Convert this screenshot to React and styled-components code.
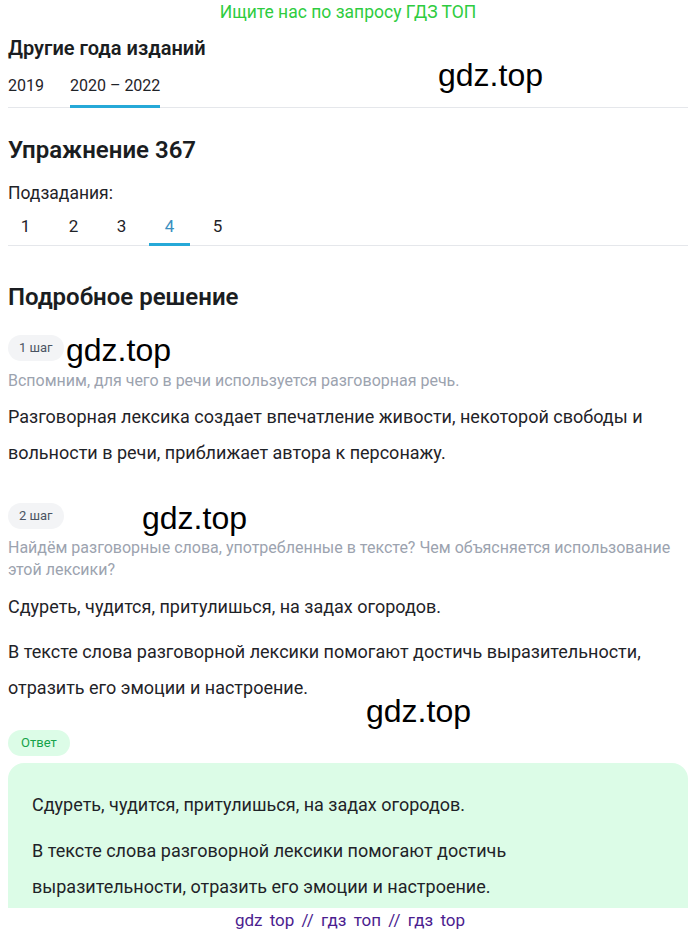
import React from "react";
import styled, { createGlobalStyle } from "styled-components";

const Global = createGlobalStyle`
  html, body { margin: 0; padding: 0; background: #fff; }
  body { font-family: Roboto, "Noto Sans", sans-serif; color: #1f2328; }
  * { box-sizing: border-box; }
`;

const Page = styled.div`
  position: relative;
  padding: 0 12px 0 8px;
`;

const Banner = styled.div`
  text-align: center;
  color: #2ecc40;
  font-size: 17.5px;
  line-height: 24px;
`;

const SectionTitle = styled.h2`
  margin: ${(p) => p.$mt || 0}px 0 0;
  font-size: ${(p) => p.$size || 20}px;
  font-weight: 600;
  line-height: ${(p) => p.$lh || 28}px;
  color: #1a1d21;
`;

const Tabs = styled.div`
  display: flex;
  gap: ${(p) => p.$gap || 0}px;
  border-bottom: 1px solid #e5e7eb;
  margin-top: ${(p) => p.$mt || 0}px;
`;

const Tab = styled.div`
  font-size: ${(p) => p.$size || 16}px;
  line-height: 22px;
  min-width: ${(p) => p.$w || 0}px;
  text-align: center;
  padding-bottom: ${(p) => p.$pb || 10}px;
  margin-bottom: -1px;
  border-bottom: 3px solid ${(p) => (p.$active ? "#26a9d8" : "transparent")};
  color: ${(p) => (p.$active && p.$blueText ? "#3a8fc0" : "#1f2328")};
  &:first-child { margin-left: ${(p) => p.$shift || 0}px; }
`;

const Label = styled.div`
  font-size: 17.5px;
  line-height: 24px;
  margin-top: ${(p) => p.$mt || 0}px;
  color: #1f2328;
`;

const Pill = styled.span`
  display: inline-block;
  font-size: 13px;
  line-height: 26px;
  height: 26px;
  padding: 0 ${(p) => p.$px || 11}px;
  border-radius: 13px;
  background: ${(p) => (p.$green ? "#dcfce7" : "#f3f4f6")};
  color: ${(p) => (p.$green ? "#16a34a" : "#4b5563")};
`;

const Step = styled.div`
  margin-top: ${(p) => p.$mt || 0}px;
  & > ${Pill} { vertical-align: top; }
`;

const Hint = styled.p`
  margin: ${(p) => p.$mt || 8}px 0 0;
  font-size: 16px;
  line-height: 22px;
  color: #9ca3af;
`;

const Text = styled.p`
  margin: ${(p) => p.$mt || 0}px 0 0;
  font-size: 18px;
  line-height: 36px;
  color: #1f2328;
`;

const AnswerBox = styled.div`
  margin-top: 7px;
  background: #dcfce7;
  border-radius: 16px;
  padding: 24px 32px 30px 24px;
`;

const Watermark = styled.div`
  position: absolute;
  left: ${(p) => p.$x}px;
  top: ${(p) => p.$y}px;
  font-family: "Liberation Sans", Arial, sans-serif;
  font-size: 32px;
  line-height: 36px;
  color: #000;
  pointer-events: none;
`;

const Footer = styled.div`
  position: fixed;
  left: 0;
  right: 0;
  bottom: 0;
  height: 27px;
  background: #fff;
  text-align: center;
  color: #4b1d8f;
  font-size: 17px;
  line-height: 24px;
  word-spacing: 3px;
`;

export default function App() {
  return (
    <>
      <Global />
      <Page>
        <Banner>Ищите нас по запросу ГДЗ ТОП</Banner>
        <SectionTitle $mt={10} $size={20} $lh={28}>Другие года изданий</SectionTitle>
        <Tabs $mt={13} $gap={26}>
          <Tab $pb={8}>2019</Tab>
          <Tab $pb={8} $active>2020 – 2022</Tab>
        </Tabs>

        <SectionTitle $mt={26} $size={24} $lh={32}>Упражнение 367</SectionTitle>
        <Label $mt={15}>Подзадания:</Label>
        <Tabs $mt={10} $gap={7}>
          {[1, 2, 3, 4, 5].map((n) => (
            <Tab key={n} $size={17} $w={41} $pb={6} $shift={-3} $active={n === 4} $blueText>
              {n}
            </Tab>
          ))}
        </Tabs>

        <SectionTitle $mt={35} $size={24} $lh={32}>Подробное решение</SectionTitle>

        <Step $mt={22}>
          <Pill $px={11}>1 шаг</Pill>
          <Hint $mt={9}>Вспомним, для чего в речи используется разговорная речь.</Hint>
          <Text $mt={7}>
            Разговорная лексика создает впечатление живости, некоторой свободы и вольности в речи, приближает автора к персонажу.
          </Text>
        </Step>

        <Step $mt={32}>
          <Pill $px={11}>2 шаг</Pill>
          <Hint $mt={8}>Найдём разговорные слова, употребленные в тексте? Чем объясняется использование этой лексики?</Hint>
          <Text $mt={8}>Сдуреть, чудится, притулишься, на задах огородов.</Text>
          <Text $mt={9}>
            В тексте слова разговорной лексики помогают достичь выразительности, отразить его эмоции и настроение.
          </Text>
        </Step>

        <Step $mt={24}>
          <Pill $green $px={13}>Ответ</Pill>
          <AnswerBox>
            <Text>Сдуреть, чудится, притулишься, на задах огородов.</Text>
            <Text $mt={10}>
              В тексте слова разговорной лексики помогают достичь выразительности, отразить его эмоции и настроение.
            </Text>
          </AnswerBox>
        </Step>

        <Watermark $x={438} $y={57}>gdz.top</Watermark>
        <Watermark $x={66} $y={332}>gdz.top</Watermark>
        <Watermark $x={142} $y={500}>gdz.top</Watermark>
        <Watermark $x={366} $y={693}>gdz.top</Watermark>
      </Page>
      <Footer>gdz top // гдз топ // гдз top</Footer>
    </>
  );
}
